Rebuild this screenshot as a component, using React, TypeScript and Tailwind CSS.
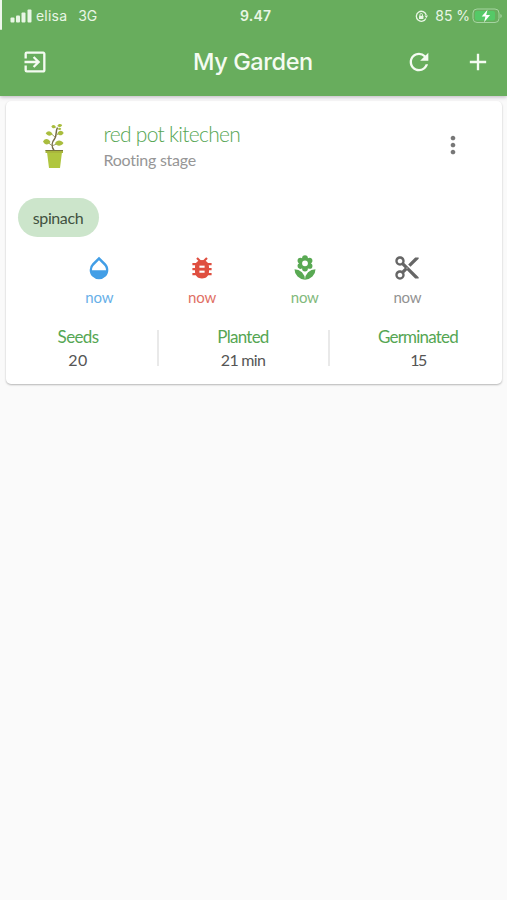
import type { IconType } from 'react-icons';
import {
  MdAdd,
  MdContentCut,
  MdExitToApp,
  MdLocalFlorist,
  MdMoreVert,
  MdOpacity,
  MdRefresh,
} from 'react-icons/md';

interface CareAction {
  id: string;
  label: string;
  icon: IconType | typeof BugIcon;
  color: string;
  text: string;
}

function BugIcon({ className }: { className?: string }) {
  return (
    <svg className={className} viewBox="0 0 28 28" fill="none" stroke="currentColor">
      <path d="m9 4 4 4m6-4-4 4" strokeWidth="2.2" />
      <path d="M4.4 10.2h19.2M4.4 15.2h19.2M4.4 20.2h19.2" strokeWidth="2.2" />
      <path
        d="M14 6c4.4 0 7 2.9 7 7v4.5c0 4.2-2.7 7-7 7s-7-2.8-7-7V13c0-4.1 2.6-7 7-7Zm-2.6 5.4v2.3h5.2v-2.3Zm0 5v2.3h5.2v-2.3Z"
        fill="currentColor"
        fillRule="evenodd"
        stroke="none"
      />
    </svg>
  );
}

const CARE_ACTIONS: CareAction[] = [
  { id: 'water', label: 'now', icon: MdOpacity, color: 'text-[#429ee6]', text: 'text-[#68b0e8]' },
  { id: 'pests', label: 'now', icon: BugIcon, color: 'text-[#df4f40]', text: 'text-[#df7065]' },
  { id: 'feed', label: 'now', icon: MdLocalFlorist, color: 'text-[#59a953]', text: 'text-[#82b97c]' },
  { id: 'prune', label: 'now', icon: MdContentCut, color: 'text-[#666]', text: 'text-[#929292]' },
];

const STATS = [
  { label: 'Seeds', value: '20', box: 'w-[151px] pr-[6px]', labelClass: 'tracking-[-0.65px]', valueClass: 'tracking-[0.4px]' },
  { label: 'Planted', value: '21 min', box: 'w-[171px]', labelClass: 'tracking-[-0.75px]', valueClass: 'tracking-[-0.7px]' },
  { label: 'Germinated', value: '15', box: 'flex-1 pl-[5px]', labelClass: 'tracking-[-0.8px]', valueClass: 'tracking-[-1.5px]' },
];

function StatusBar() {
  return (
    <div className="relative flex h-8 items-center justify-between pl-[10px] pr-[5px] text-[14px] leading-none text-[#e9f6e5]">
      <div className="absolute left-0 top-0 h-[30px] w-[2px] rounded-b-sm bg-[#eef7ec]" />
      <div className="flex items-center">
        <svg className="h-[14px] w-[22px]" viewBox="0 0 22 14" fill="currentColor">
          <rect x="0.5" y="8.5" width="4" height="5" rx="1" />
          <rect x="6" y="6.5" width="4" height="7" rx="1" />
          <rect x="11.5" y="3.5" width="4" height="10" rx="1" />
          <rect x="17.5" y="0.5" width="4" height="13" rx="1" />
        </svg>
        <span className="ml-1 tracking-[0.2px]">elisa</span>
        <span className="ml-[11px]">3G</span>
      </div>
      <span className="absolute left-[240px] text-[14px] font-semibold tracking-[0.2px]">9.47</span>
      <div className="flex items-center">
        <svg className="mr-[7px] h-[13px] w-[13px]" viewBox="0 0 13 13" fill="none" stroke="currentColor">
          <path d="M10.9 8.4A5 5 0 1 1 11.2 5" strokeWidth="1.3" />
          <path d="M9.5 5.5h3.5l-1.7 2.7z" fill="currentColor" stroke="none" />
          <rect x="4" y="5.7" width="4.4" height="3.4" rx="0.5" fill="currentColor" stroke="none" />
          <path d="M4.9 6V4.8a1.3 1.3 0 0 1 2.6 0V6" strokeWidth="0.9" />
        </svg>
        <span className="tracking-[-0.05px]">85 %</span>
        <svg className="ml-[2px] h-4 w-[30px]" viewBox="0 0 30 16" fill="none">
          <rect x="1" y="1" width="26" height="13.5" rx="4" stroke="#a5d4a1" />
          <rect x="3" y="3" width="20" height="9.5" rx="2" fill="#55c967" />
          <path d="M28.5 6v4c1.5-.6 1.5-3.4 0-4z" fill="#b8deb3" />
          <path d="M15.5 1.7 9.7 8.6h3.7L12.1 14.2l6-7.3h-3.9z" fill="#fff" />
        </svg>
      </div>
    </div>
  );
}

function Toolbar() {
  return (
    <div className="relative flex h-16 items-center justify-between pb-1 pl-[21px] pr-[15px] text-[#f4fbf1]">
      <button aria-label="Log out">
        <MdExitToApp className="size-7" />
      </button>
      <h1 className="absolute left-[193px] top-[14px] whitespace-nowrap text-[23.5px] font-medium leading-8 tracking-[-0.4px]">
        My Garden
      </h1>
      <div className="flex items-center gap-[31px]">
        <button aria-label="Refresh">
          <MdRefresh className="size-7" />
        </button>
        <button aria-label="Add plant">
          <MdAdd className="size-7" />
        </button>
      </div>
    </div>
  );
}

function PottedPlant() {
  return (
    <svg className="h-[46px] w-[22px]" viewBox="0 0 22 46" fill="none">
      <path d="M11 27.5C7.5 22 9 19 11.5 16c2.6-3.2.6-7 3-11.5" stroke="#756b48" strokeWidth="1.5" />
      <path d="m12 14-4-3.5m5.5 1.5 3-2M9.5 23 5 19.5m5 3 6-2.5" stroke="#858747" strokeWidth="0.8" />
      <g fill="#a9bd3e">
        <path d="M9.5 11C7.5 7.3 4.5 7.8 2.7 10.3c2 3 5 3 6.8.7z" />
        <path d="M14.3 10.3c1.8-3.7 4.7-3.2 6.4-.3-1.7 3-4.7 3.2-6.4.3z" />
        <path d="M0 18.5c2-3.6 5.5-3.2 7.5.6-2.5 3.3-5.7 3-7.5-.6z" />
        <path d="M12 20.3c2-3.9 6.3-3.4 8.5-.3-2.2 3.4-6.5 3.7-8.5.3z" />
        <path d="M13 4.2C11.8 1.5 9.8 1.5 8.3 3.4c1.3 2.3 3.3 2.3 4.7.8z" />
        <path d="M14.3 3c1-2.6 3.2-2.6 4.9-1-1 2.4-3.2 2.7-4.9 1z" />
        <path d="M14.8 6c1.2-1.6 2.6-1.5 3.5-.1-.9 1.4-2.4 1.5-3.5.1z" />
      </g>
      <path d="M4 29h15l-2 16H6z" fill="#b0c63f" />
      <path d="M2.5 27h17.5v3H2.5z" fill="#a9b73c" />
      <path d="M2.5 27.5H20" stroke="#77753a" />
    </svg>
  );
}

function PlantCard() {
  return (
    <article className="mx-auto mt-[5px] h-[283px] w-[496px] rounded-[5px] bg-white font-[Lato,sans-serif] shadow-[0_1px_2px_rgba(0,0,0,0.28)]">
      <div className="flex h-[97px] items-start">
        <div className="ml-[37px] mt-[22px]">
          <PottedPlant />
        </div>
        <div className="ml-[39px] mt-[19px]">
          <h2 className="text-[21px] font-light leading-[28px] tracking-[-0.7px] text-[#55a653]">red pot kitechen</h2>
          <p className="mt-px text-[16px] leading-[22px] tracking-[-0.25px] text-[#969696]">Rooting stage</p>
        </div>
        <button aria-label="More options" className="ml-auto mr-[35px] mt-[30px] text-[#777]">
          <MdMoreVert className="size-7" />
        </button>
      </div>

      <div className="ml-3 flex h-[39px] w-[81px] items-center justify-center rounded-full bg-[#cce5cb] text-[16px] tracking-[-0.4px] text-[#41513f]">
        spinach
      </div>

      <div className="mt-[17px] flex pl-[42.5px]">
        {CARE_ACTIONS.map(({ id, label, icon: Icon, color, text }) => (
          <div key={id} className="flex w-[102.7px] flex-col items-center">
            <Icon className={`size-7 ${color}`} />
            <span className={`mt-[5px] text-[15px] leading-[20px] tracking-[-0.2px] ${text}`}>{label}</span>
          </div>
        ))}
      </div>

      <div className="mt-[23px] flex items-center">
        {STATS.map(({ label, value, box, labelClass, valueClass }, index) => (
          <div key={label} className={`flex h-[36px] items-center justify-center text-center ${index > 0 ? 'border-l-2 border-[#e9e9e9]' : ''} ${box}`}>
            <div className="text-[17px] leading-[23px]">
              <div className={`text-[#55a653] ${labelClass}`}>{label}</div>
              <div className={`text-[16px] leading-[23px] text-[#555] ${valueClass}`}>{value}</div>
            </div>
          </div>
        ))}
      </div>
    </article>
  );
}

export default function App() {
  return (
    <main className="h-[900px] w-[507px] overflow-hidden bg-[#fafafa] font-[Inter,sans-serif]">
      <header className="relative h-24 bg-[#68ad5d] shadow-[0_1px_4px_rgba(70,50,75,0.35)]">
        <StatusBar />
        <Toolbar />
      </header>
      <PlantCard />
    </main>
  );
}
